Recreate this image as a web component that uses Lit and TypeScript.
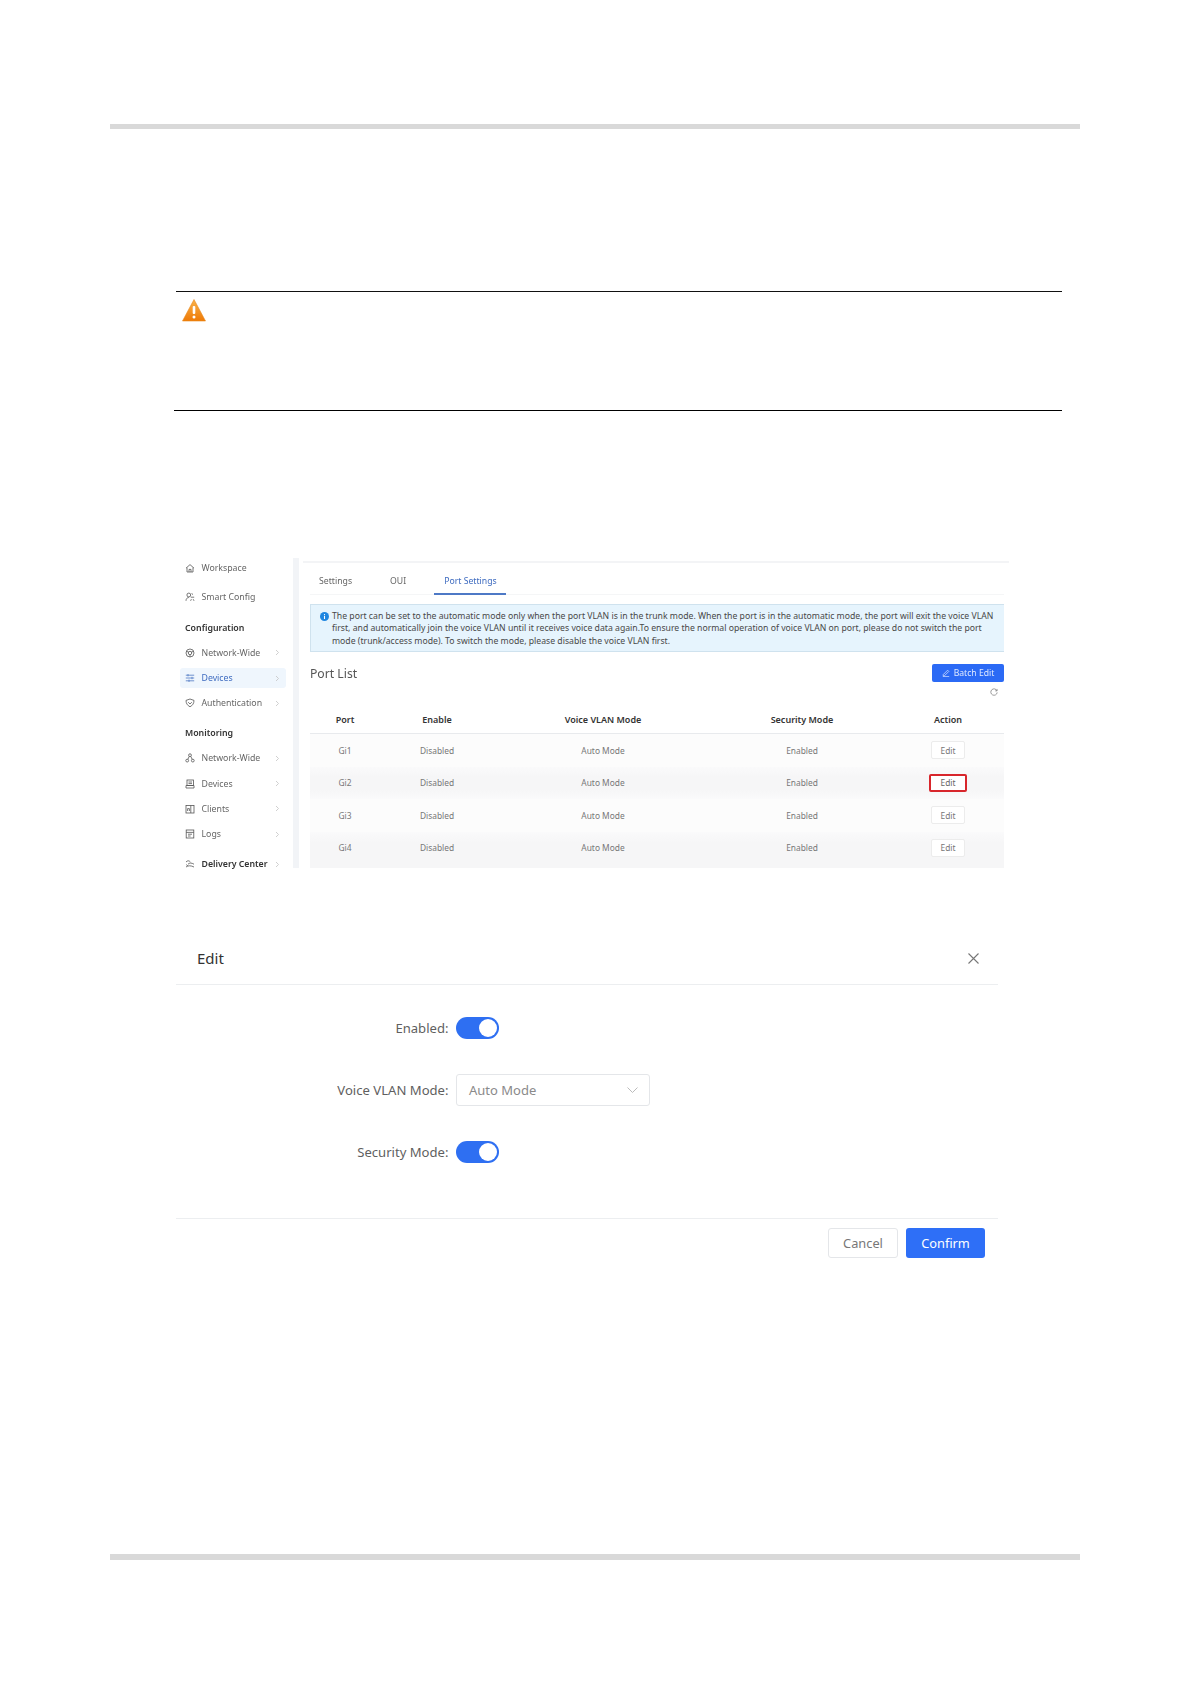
import { LitElement, html, css, svg } from "lit";
import { customElement } from "lit/decorators.js";

const ICONS: Record<string, unknown> = {
  home: svg`<path d="M1 5.200 5 1.600l4 3.600M2 4.600V9h6V4.600M4 9V6.400h2V9"/>`,
  smart: svg`<circle cx="3.800" cy="3" r="1.900"/><path d="M1 8.800c0-2 1.200-3.300 2.800-3.300M6.800 1.200l.8 1.500M5.800 5.200h3.400M6.400 7.200l-.8 1.600M8.200 7.200l.8 1.600"/>`,
  net: svg`<circle cx="5" cy="5" r="4"/><circle cx="5" cy="5" r="1.700"/><path d="M1.400 3.400 3.600 4M8.600 3.400 6.400 4M5 9V6.800"/>`,
  sliders: svg`<path d="M.8 2.200h8.400M.8 5h8.400M.8 7.800h8.400M3 1v2.400M7 3.800v2.400M4 6.600V9"/>`,
  shield: svg`<path d="M1 2.400 5 1l4 1.400c0 3-1.400 5-4 6.400-2.600-1.400-4-3.400-4-6.400Z"/><path d="M3.200 4.200 5 6l1.800-1.800"/>`,
  tree: svg`<circle cx="5" cy="2.200" r="1.400"/><circle cx="2.200" cy="7.600" r="1.400"/><circle cx="7.800" cy="7.600" r="1.400"/><path d="M4.200 3.400 2.800 6.400M5.800 3.400l1.400 3"/>`,
  box: svg`<rect x="2" y="1" width="6.500" height="5.500"/><path d="M1 9V6.500h8V9ZM3.500 3h3.500M3.500 4.600h3.500"/>`,
  clients: svg`<rect x="1" y="1.500" width="8" height="7.500"/><path d="M5.800 1.500V9M2.600 7V4.600h1.800V7"/>`,
  logs: svg`<rect x="1.200" y="1" width="7.600" height="8"/><path d="M1.200 3.400h7.600M3 5.200h4M3 7h2.600"/>`,
  delivery: svg`<path d="M1 3c1.500-1.600 3-1.600 4.400 0M3 5.200c1.500-1.500 3.500-1.500 6 0M1 8c2-1.600 5-1.600 8 0M1.200 5.600 3 7"/>`,
};

type Side =
  | { kind: "head"; label: string; top: number }
  | { kind: "item"; label: string; icon: string; top: number; chevron?: boolean; active?: boolean; strong?: boolean };

const SIDE: Side[] = [
  { kind: "item", label: "Workspace", icon: "home", top: 0 },
  { kind: "item", label: "Smart Config", icon: "smart", top: 9 },
  { kind: "head", label: "Configuration", top: 13.5 },
  { kind: "item", label: "Network-Wide", icon: "net", top: 8 },
  { kind: "item", label: "Devices", icon: "sliders", top: 5.5, active: true },
  { kind: "item", label: "Authentication", icon: "shield", top: 5 },
  { kind: "head", label: "Monitoring", top: 13 },
  { kind: "item", label: "Network-Wide", icon: "tree", top: 8 },
  { kind: "item", label: "Devices", icon: "box", top: 5.5 },
  { kind: "item", label: "Clients", icon: "clients", top: 5 },
  { kind: "item", label: "Logs", icon: "logs", top: 5.5 },
  { kind: "item", label: "Delivery Center", icon: "delivery", top: 10, strong: true },
].map((s: any, i) => (s.kind === "item" && i > 2 ? { ...s, chevron: true } : s)) as Side[];

const ROWS = ["Gi1", "Gi2", "Gi3", "Gi4"];

@customElement("app-root")
export class AppRoot extends LitElement {
  static styles = css`
    :host {
      display: block;
      width: 1191px;
      height: 1684px;
      background: #fff;
      overflow: hidden;
      font-family: "Noto Sans", "Open Sans", sans-serif;
      color: #444;
    }
    .page { display: flex; flex-direction: column; padding-top: 124px; }
    .bar { height: 5px; width: 970px; margin-left: 110px; background: #d9d9d9; flex: none; }
    .bar.bottom { height: 6px; margin-top: 296px; }

    .line-top { height: 1px; background: #111; margin: 162px 0 0 176px; width: 886px; }
    .notice { height: 118px; margin-left: 182px; padding-top: 7px; box-sizing: border-box; }
    .notice svg { display: block; width: 24px; height: 23px; }
    .line-bot { height: 1px; background: #000; margin-left: 174px; width: 888px; }

    .shot {
      margin: 147px 0 0 175px;
      width: 834px;
      height: 310px;
      display: flex;
      filter: blur(0.35px);
    }
    .side { width: 118px; flex: none; display: flex; flex-direction: column; }
    .gutter { width: 6px; flex: none; background: #f2f4f7; }

    .s-item {
      height: 20px;
      flex: none;
      display: flex;
      align-items: center;
      margin: 0 7px 0 5px;
      padding-left: 5px;
      font-size: 8.750px;
      color: #666;
      border-radius: 3px;
    }
    .s-item svg.ic {
      width: 10px;
      height: 10px;
      margin-right: 6.500px;
      fill: none;
      stroke: #555;
      stroke-width: 0.8;
      flex: none;
    }
    .s-item .lbl { flex: 1; white-space: nowrap; }
    .s-item svg.chev { width: 5px; height: 7px; fill: none; stroke: #c4c4c4; stroke-width: 0.8; margin-right: 6px; flex: none; }
    .s-item.active { background: #eff6fd; color: #3f6cc0; }
    .s-item.active svg.ic { stroke: #4f78c4; }
    .s-item.strong { color: #333; font-weight: 600; }
    .s-head { height: 14px; flex: none; margin-left: 10px; font-size: 8.800px; font-weight: 600; color: #333; line-height: 14px; }

    .main { flex: 1; display: flex; flex-direction: column; padding: 3px 5px 0 11px; min-width: 0; height: 310px; box-sizing: border-box; overflow: hidden; }
    .topline { height: 2px; background: #f3f4f6; margin: 0 -5px 0 -7px; flex: none; }
    .tabs {
      height: 32px;
      box-sizing: border-box;
      flex: none;
      display: flex;
      align-items: stretch;
      border-bottom: 1px solid #f5f6f7;
      font-size: 8.700px;
      color: #666;
      padding: 3px 0 0 9px;
    }
    .tab { display: flex; align-items: center; margin-right: 38px; padding-top: 2px; }
    .tab.on { color: #3f6cc0; padding: 2px 9px 0 10px; margin: 0 0 -1px -10px; border-bottom: 2px solid #4d79c6; }
    .alert {
      margin-top: 9px;
      height: 48px;
      flex: none;
      box-sizing: border-box;
      background: #e6f4fd;
      border: 1px solid #cfe2ee;
      border-width: 1px 0 1px 1px;
      padding: 4.750px 0 0 21px;
      font-size: 8.690px;
      line-height: 12.500px;
      color: #484848;
      position: relative;
      white-space: nowrap;
    }
    .alert svg { position: absolute; left: 9px; top: 7px; width: 9px; height: 9px; }
    .list-head { margin-top: 12px; height: 18px; flex: none; display: flex; align-items: center; justify-content: space-between; }
    .list-title { font-size: 12.200px; color: #555; }
    .batch {
      width: 72px;
      height: 18px;
      border-radius: 2px;
      background: #2b6af5;
      color: #dfe9ff;
      font-size: 8.600px;
      display: flex;
      align-items: center;
      justify-content: center;
      gap: 4px;
    }
    .batch svg { width: 8px; height: 8px; fill: none; stroke: #dfe9ff; stroke-width: 0.9; }
    .refresh { height: 11px; margin-top: 6px; flex: none; display: flex; justify-content: flex-end; padding-right: 6px; }
    .refresh svg { width: 8px; height: 8px; fill: none; stroke: #777; stroke-width: 0.9; }
    .row {
      display: grid;
      grid-template-columns: 70px 114px 218px 180px 112px;
      align-items: center;
      justify-items: center;
      flex: none;
      font-size: 8.400px;
      color: #777;
      height: 32.500px;
      background: #fcfcfc;
    }
    .row.header {
      height: 35px;
      box-sizing: border-box;
      padding-top: 7px;
      font-weight: 600;
      color: #333;
      border-bottom: 1px solid #e8eaed;
      font-size: 9px;
      background: #fff;
    }
    .row.alt { background: linear-gradient(#fafafb, #f6f6f7 30%, #f6f6f7 70%, #fafafb); }
    .row.last { height: 36.500px; box-sizing: border-box; padding-bottom: 4px; background: linear-gradient(#fafafb, #f6f6f7 30%); }
    .edit {
      width: 34px;
      height: 18px;
      box-sizing: border-box;
      background: #fff;
      border: 1px solid #ececec;
      border-radius: 2px;
      display: flex;
      align-items: center;
      justify-content: center;
    }
    .edit.mark { width: 38px; border: 2px solid #d8262c; color: #666; }

    .dialog { margin: 67px 0 0 176px; width: 824px; color: #5f5f5f; display: flex; flex-direction: column; }
    .d-head {
      height: 50px;
      width: 822px;
      box-sizing: border-box;
      border-bottom: 1px solid #eceef0;
      display: flex;
      align-items: center;
      justify-content: space-between;
      padding: 0 19px 3px 21px;
      font-size: 15px;
      color: #333;
    }
    .d-head svg { width: 11px; height: 11px; stroke: #777; stroke-width: 1.100; fill: none; }
    .d-body { height: 233px; padding-top: 32px; box-sizing: border-box; display: flex; flex-direction: column; gap: 35px; }
    .f { display: flex; align-items: center; font-size: 13.100px; }
    .f label { width: 272.500px; text-align: right; margin-right: 7.500px; white-space: nowrap; flex: none; }
    .toggle {
      width: 43px;
      height: 22px;
      border-radius: 11px;
      background: #2e6ff2;
      display: flex;
      align-items: center;
      justify-content: flex-end;
      padding-right: 2px;
      box-sizing: border-box;
    }
    .toggle i { width: 18px; height: 18px; border-radius: 50%; background: #fff; display: block; }
    .select {
      width: 194px;
      height: 32px;
      box-sizing: border-box;
      border: 1px solid #e4e6e9;
      border-radius: 3px;
      display: flex;
      align-items: center;
      justify-content: space-between;
      padding: 0 11px 0 12px;
      color: #8a8a8a;
      font-size: 13px;
    }
    .select svg { width: 11px; height: 6px; fill: none; stroke: #bbb; stroke-width: 1; }
    .d-foot {
      border-top: 1px solid #eceef0;
      width: 822px;
      height: 40px;
      box-sizing: border-box;
      padding: 9px 13px 0 0;
      display: flex;
      justify-content: flex-end;
      gap: 8px;
      font-size: 12.800px;
    }
    .btn { height: 30px; box-sizing: border-box; border-radius: 3px; display: flex; align-items: center; justify-content: center; }
    .btn.cancel { width: 70px; border: 1px solid #e4e6e9; color: #777; }
    .btn.ok { width: 79px; background: #2e6ff7; color: #fff; }
  `;

  private sideRow(s: Side) {
    if (s.kind === "head") {
      return html`<div class="s-head" style="margin-top:${s.top}px">${s.label}</div>`;
    }
    const cls = `s-item${s.active ? " active" : ""}${s.strong ? " strong" : ""}`;
    return html`<div class=${cls} style="margin-top:${s.top}px">
      <svg class="ic" viewBox="0 0 10 10">${ICONS[s.icon]}</svg>
      <span class="lbl">${s.label}</span>
      ${s.chevron ? html`<svg class="chev" viewBox="0 0 5 7"><path d="M1 1l2.500 2.500L1 6" /></svg>` : ""}
    </div>`;
  }

  render() {
    return html`<div class="page">
      <div class="bar"></div>

      <div class="line-top"></div>
      <div class="notice">
        <svg viewBox="0 0 24 23">
          <defs>
            <linearGradient id="w" x1="0" y1="0" x2="0" y2="1">
              <stop offset="0" stop-color="#f9b24a" />
              <stop offset="1" stop-color="#ee7a06" />
            </linearGradient>
          </defs>
          <path d="M12 .5 23.500 22H.5Z" fill="url(#w)" stroke="#e98a1c" stroke-width=".6" stroke-linejoin="round" />
          <rect x="10.700" y="7" width="2.600" height="8" rx="1" fill="#fff" />
          <circle cx="12" cy="18" r="1.500" fill="#fff" />
        </svg>
      </div>
      <div class="line-bot"></div>

      <div class="shot">
        <div class="side">${SIDE.map((s) => this.sideRow(s))}</div>
        <div class="gutter"></div>
        <div class="main">
          <div class="topline"></div>
          <div class="tabs">
            <div class="tab">Settings</div>
            <div class="tab">OUI</div>
            <div class="tab on">Port Settings</div>
          </div>
          <div class="alert">
            <svg viewBox="0 0 10 10">
              <circle cx="5" cy="5" r="5" fill="#1f86e0" />
              <rect x="4.400" y="4.300" width="1.200" height="3.500" fill="#fff" />
              <rect x="4.400" y="2.300" width="1.200" height="1.200" fill="#fff" />
            </svg>
            The port can be set to the automatic mode only when the port VLAN is in the trunk mode. When the port is in the automatic mode, the port will exit the voice VLAN<br />first, and automatically join the voice VLAN until it receives voice data again.To ensure the normal operation of voice VLAN on port, please do not switch the port<br />mode (trunk/access mode). To switch the mode, please disable the voice VLAN first.
          </div>
          <div class="list-head">
            <div class="list-title">Port List</div>
            <div class="batch">
              <svg viewBox="0 0 10 10"><path d="M1.500 7 7 1.500l1.500 1.500L3 8.500H1.500ZM1 9.500h8" /></svg>
              Batch Edit
            </div>
          </div>
          <div class="refresh">
            <svg viewBox="0 0 10 10"><path d="M8.700 3.500A4 4 0 1 0 9 5.500M8.800 1.200v2.400H6.500" /></svg>
          </div>
          <div class="row header">
            <span>Port</span><span>Enable</span><span>Voice VLAN Mode</span><span>Security Mode</span><span>Action</span>
          </div>
          ${ROWS.map(
            (p, i) => html`<div class="row ${i % 2 ? "alt" : ""} ${i === 3 ? "last" : ""}">
              <span>${p}</span><span>Disabled</span><span>Auto Mode</span><span>Enabled</span>
              <span class="edit ${i === 1 ? "mark" : ""}">Edit</span>
            </div>`
          )}
        </div>
      </div>

      <div class="dialog">
        <div class="d-head">
          <span>Edit</span>
          <svg viewBox="0 0 11 11"><path d="M.5.5l10 10M10.500.5l-10 10" /></svg>
        </div>
        <div class="d-body">
          <div class="f"><label>Enabled:</label><div class="toggle"><i></i></div></div>
          <div class="f">
            <label>Voice VLAN Mode:</label>
            <div class="select">
              <span>Auto Mode</span>
              <svg viewBox="0 0 11 6"><path d="M.5.5 5.500 5.500 10.500.5" /></svg>
            </div>
          </div>
          <div class="f"><label>Security Mode:</label><div class="toggle"><i></i></div></div>
        </div>
        <div class="d-foot">
          <div class="btn cancel">Cancel</div>
          <div class="btn ok">Confirm</div>
        </div>
      </div>

      <div class="bar bottom"></div>
    </div>`;
  }
}
